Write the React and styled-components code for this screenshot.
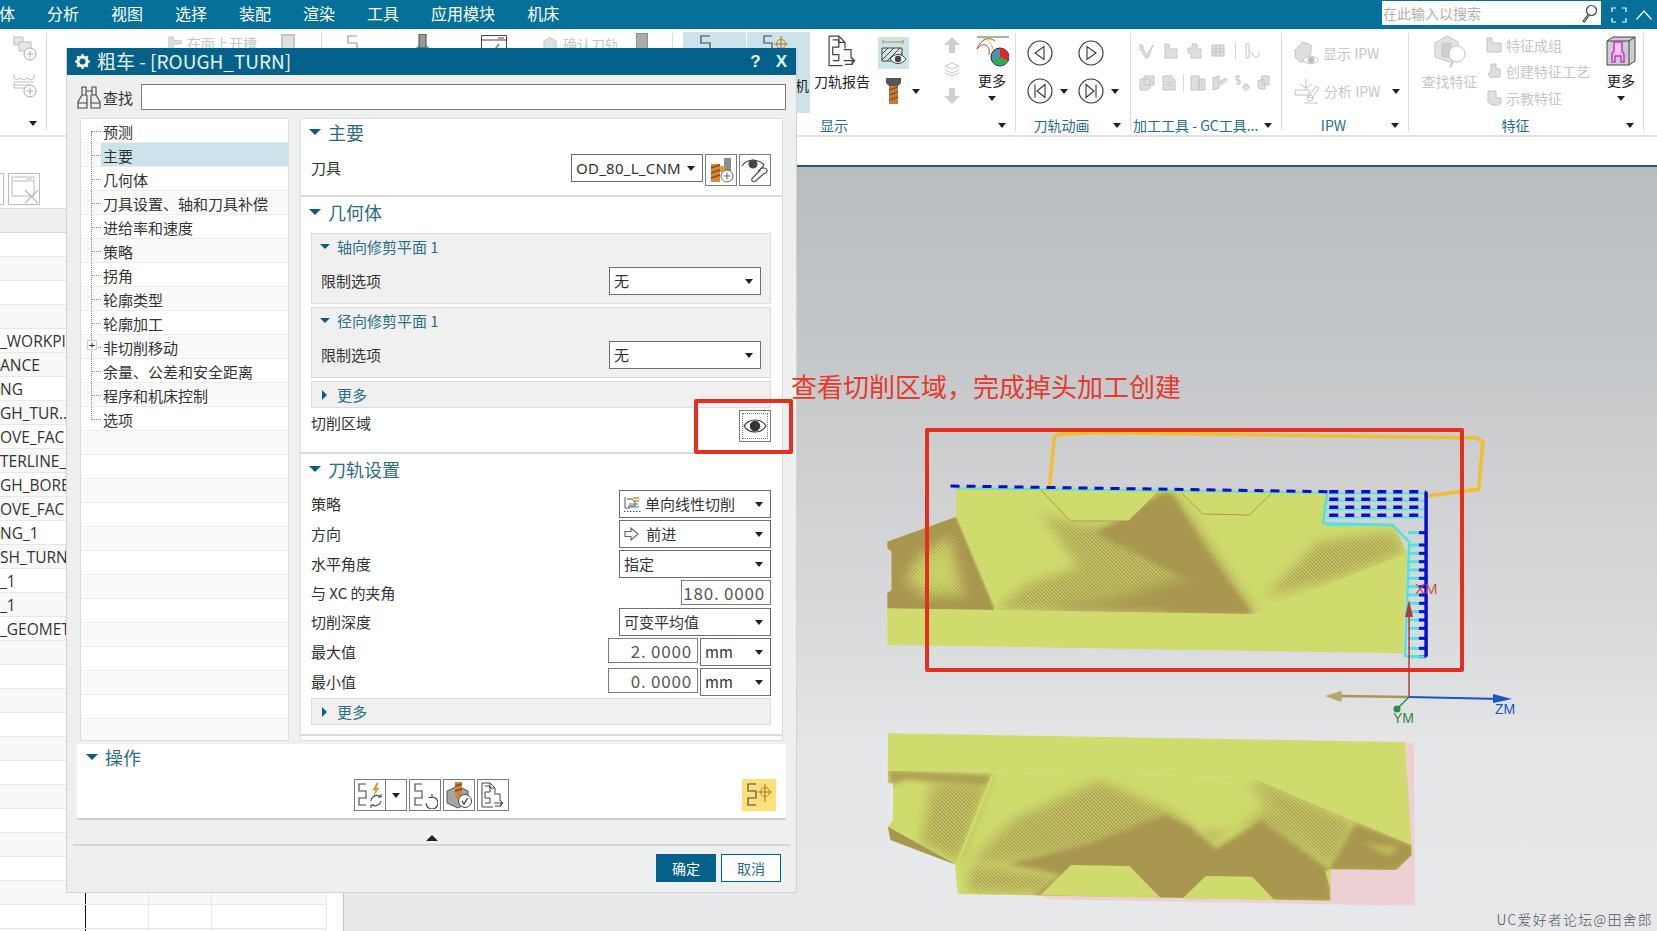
import React from 'react';
import styled, { createGlobalStyle } from 'styled-components';

const GlobalStyle = createGlobalStyle`
  html, body {
    margin: 0;
    padding: 0;
    overflow: hidden;
    background: #fff;
  }
  * {
    box-sizing: border-box;
  }
`;

const Page = styled.div`
  position: relative;
  width: 1657px;
  height: 931px;
  overflow: hidden;
  display: flex;
  flex-direction: column;
  font-family: "Noto Sans CJK SC", "Noto Sans", sans-serif;
  font-size: 15px;
  color: #333;
`;

/* top menu */
const MenuBar = styled.div`
  height: 29px;
  flex: none;
  background: #05719b;
  display: flex;
  align-items: center;
  padding-left: 0;
  color: #fff;
`;

const MenuItem = styled.span`
  font-size: 16px;
  line-height: 27px;
  margin-left: ${(p) => (p.$first ? '-1px' : '32px')};
  margin-top: -2px;
`;

const SearchBox = styled.div`
  margin-left: auto;
  width: 219px;
  height: 24px;
  margin-top: -3px;
  background: #fff;
  display: flex;
  align-items: center;
  justify-content: space-between;
  padding: 0 3px 0 1px;
  color: #b0b0b0;
  font-size: 14px;
`;

const WinIcons = styled.div`
  display: flex;
  align-items: center;
  gap: 9px;
  margin: 0 5px 0 10px;
`;

/* ribbon */
const Ribbon = styled.div`
  height: 108px;
  flex: none;
  display: flex;
  background: #fff;
  border-bottom: 2px solid #e2e2e2;
`;

const Group = styled.div`
  width: ${(p) => p.$w}px;
  flex: none;
  margin-top: 4px;
  height: 98px;
  border-right: 1px solid #dcdcdc;
  display: flex;
  flex-direction: column;
`;

const Tools = styled.div`
  height: 80px;
  flex: none;
  display: flex;
  padding-left: ${(p) => p.$pl || 0}px;
`;

const Foot = styled.div`
  flex: 1;
  display: flex;
  align-items: center;
  margin-top: 2px;
  padding-right: 9px;
`;

const FootLabel = styled.span`
  flex: 1;
  text-align: ${(p) => (p.$left ? 'left' : 'center')};
  padding-left: ${(p) => (p.$left ? '2px' : '0')};
  font-size: 14px;
  line-height: 20px;
  color: #1e6e8c;
  white-space: nowrap;
`;

const Caret = styled.span`
  display: inline-block;
  flex: none;
  width: 0;
  height: 0;
  border-left: 4px solid transparent;
  border-right: 4px solid transparent;
  border-top: 5px solid #222;
  margin-left: ${(p) => p.$ml || 0}px;
  margin-top: ${(p) => p.$mt || 0}px;
`;

const Col = styled.div`
  display: flex;
  flex-direction: column;
  align-items: ${(p) => (p.$start ? 'flex-start' : 'center')};
  flex: none;
  width: ${(p) => (p.$w ? `${p.$w}px` : 'auto')};
  margin-left: ${(p) => p.$ml || 0}px;
  padding-top: ${(p) => p.$pt || 0}px;
  gap: ${(p) => p.$gap || 0}px;
`;

const RowIcons = styled.div`
  display: flex;
  align-items: center;
  margin-left: ${(p) => p.$ml || 0}px;
  margin-top: ${(p) => p.$mt || 0}px;
  gap: ${(p) => p.$gap || 0}px;
`;

const ToolLabel = styled.span`
  font-size: 14px;
  line-height: 18px;
  white-space: nowrap;
  color: ${(p) => (p.$off ? '#c6c6c6' : '#222')};
  margin-top: ${(p) => p.$mt || 0}px;
  margin-left: ${(p) => p.$ml || 0}px;
`;

const HiTool = styled.div`
  width: 63px;
  height: 81px;
  margin-left: ${(p) => p.$ml || 0}px;
  margin-top: -1px;
  background: #cde3ea;
  display: flex;
  flex-direction: column;
  align-items: flex-start;
  padding: 3px 0 0 15px;
  font-size: 14px;
`;

const HiLabel = styled.span`
  align-self: flex-end;
  margin-top: 17px;
  padding-right: 1px;
  font-size: 14px;
  line-height: 18px;
  color: #222;
`;

const ToggleTool = styled.div`
  width: 31px;
  height: 32px;
  background: #cde3ea;
  display: flex;
  align-items: center;
  justify-content: center;
`;

const ButtonGrid = styled.div`
  display: grid;
  grid-template-columns: 51px 51px;
  grid-auto-rows: 38px;
  padding: 1px 0 0 11px;
`;

const GridCell = styled.div`
  display: flex;
  align-items: center;
  gap: 7px;
`;

const VDiv = styled.span`
  width: 1px;
  height: 18px;
  background: #d8d8d8;
  flex: none;
`;

const FeatureList = styled.div`
  display: flex;
  flex-direction: column;
  gap: 7.5px;
  margin-left: 8px;
  padding-top: 2px;
`;

const FeatureItem = styled.div`
  display: flex;
  align-items: center;
  gap: 4px;
  height: 19px;
  font-size: 14px;
  color: #c6c6c6;
  white-space: nowrap;
`;

/* below ribbon */
const Body = styled.div`
  flex: 1;
  display: flex;
  min-height: 0;
`;

const Side = styled.div`
  width: 344px;
  flex: none;
  background: #fff;
  border-right: 1px solid #c4c4c4;
  display: flex;
  flex-direction: column;
  overflow: hidden;
`;

const SideTop = styled.div`
  height: 71px;
  flex: none;
  padding-top: 36px;
  display: flex;
  gap: 4px;
`;

const SideStub = styled.div`
  width: 4px;
  height: 32px;
  border: 1px solid #bcbcbc;
  border-left: none;
`;

const SideHead = styled.div`
  height: 25px;
  flex: none;
  width: 327px;
  background: #efefef;
  border-top: 1px solid #d8d8d8;
  border-bottom: 1px solid #d8d8d8;
`;

const SideRow = styled.div`
  height: 24px;
  flex: none;
  width: 327px;
  display: grid;
  grid-template-columns: 86px 63px 63px 115px;
  background: ${(p) => (p.$alt ? '#f8f8f8' : '#fff')};
  border-bottom: 1px solid #e8e8e8;
  font-size: 15.5px;
  line-height: 25px;
  color: #333;
  font-family: "Open Sans", "Noto Sans", sans-serif;
`;

const SideCell = styled.div`
  border-right: 1px solid ${(p) => (p.$dark ? '#111' : '#e8e8e8')};
  white-space: nowrap;
  overflow: hidden;
`;

const Stage = styled.div`
  flex: 1;
  display: flex;
  flex-direction: column;
`;

const StageStrip = styled.div`
  height: 30px;
  flex: none;
  background: #fff;
  border-bottom: 2px solid #1f5d75;
`;

const Viewport = styled.div`
  flex: 1;
  position: relative;
  background: linear-gradient(180deg, #b7bdc0 0%, #c9cbcd 32%, #dcdddf 65%, #e6e7e9 78%, #e7e8ea 100%);
`;

const Scene = styled.svg`
  position: absolute;
  inset: 0;
  width: 100%;
  height: 100%;
`;

const Watermark = styled.div`
  position: absolute;
  right: 4px;
  bottom: 2px;
  font-size: 14px;
  line-height: 20px;
  letter-spacing: 1.2px;
  color: #55575a;
  white-space: nowrap;
  font-family: "Noto Sans CJK SC", serif;
  font-weight: 300;
`;

/* dialog */
const Dialog = styled.div`
  position: absolute;
  left: 66px;
  top: 48px;
  width: 731px;
  height: 845px;
  background: #eeefef;
  border: 1px solid #d2d2d2;
  border-top: none;
  display: flex;
  flex-direction: column;
`;

const TitleBar = styled.div`
  height: 27px;
  flex: none;
  background: #04628a;
  color: #e8f4f8;
  display: flex;
  align-items: center;
  padding: 0 0 0 8px;
  font-size: 19px;
  gap: 7px;
`;

const TitleText = styled.span`
  flex: 1;
  line-height: 25px;
  margin-top: -2px;
  white-space: nowrap;
`;

const TitleBtn = styled.span`
  font-size: 17px;
  font-weight: 700;
  line-height: 26px;
  margin-right: ${(p) => p.$mr}px;
  font-family: "Liberation Sans", sans-serif;
`;

const FindRow = styled.div`
  height: 43px;
  flex: none;
  display: flex;
  align-items: center;
  padding: 9px 10px 8px 10px;
`;

const FindLabel = styled.span`
  font-size: 15px;
  margin-left: 2px;
  width: 38px;
  flex: none;
`;

const FindInput = styled.div`
  flex: 1;
  height: 26px;
  background: #fff;
  border: 1px solid #7c7c7c;
`;

const Split = styled.div`
  display: flex;
  flex: none;
  height: 623px;
  padding: 0 13px;
  gap: 11px;
`;

const Tree = styled.div`
  position: relative;
  width: 209px;
  flex: none;
  background: #fff;
  border: 1px solid #dcdcdc;
  overflow: hidden;
`;

const TreeRow = styled.div`
  position: relative;
  height: 24px;
  background: ${(p) => (p.$alt ? '#fafafa' : '#fff')};
  border-bottom: 1px solid #ececec;
  padding-left: 20px;
  display: flex;

  &::before {
    content: '';
    display: ${(p) => (p.$blank ? 'none' : 'block')};
    position: absolute;
    left: 10px;
    top: 12px;
    width: 10px;
    border-top: 1px dotted #888;
  }
`;

const TreeText = styled.span`
  flex: 1;
  padding-left: 2px;
  line-height: 25px;
  font-size: 15px;
  color: #333;
  white-space: nowrap;
  background: ${(p) => (p.$sel ? '#cde3ea' : 'transparent')};
`;

const TreeSpine = styled.div`
  position: absolute;
  left: 10px;
  top: 13px;
  height: 288px;
  border-left: 1px dotted #888;
`;

const PlusBox = styled.div`
  position: absolute;
  left: 6px;
  top: 5px;
  width: 10px;
  height: 10px;
  background: #fff;
  border: 1px solid #ccc;
  font-size: 11px;
  line-height: 8px;
  text-align: center;
  font-family: "Liberation Sans", sans-serif;
  color: #222;
  z-index: 1;
`;

const Panel = styled.div`
  flex: 1;
  background: #fff;
  border: 1px solid #dcdcdc;
  overflow: hidden;
`;

const Section = styled.div`
  display: flow-root;
  height: ${(p) => p.$h}px;
  padding: 0 11px 0 10px;
  border-bottom: 2px solid #dadada;
`;

const SectionHead = styled.div`
  height: 30px;
  margin-left: -2px;
  margin-top: ${(p) => p.$mt || 0}px;
  display: flex;
  align-items: center;
  gap: 7px;
  font-size: 18px;
  color: #2a6d84;
`;

const Tri = styled.span`
  display: inline-block;
  flex: none;
  width: 0;
  height: 0;
  ${(p) =>
    p.$right
      ? `border-top: 5px solid transparent;
         border-bottom: 5px solid transparent;
         border-left: 5px solid #0b5d7e;
         margin: 0 3px 0 2px;`
      : `border-left: ${p.$big ? 6 : 5}px solid transparent;
         border-right: ${p.$big ? 6 : 5}px solid transparent;
         border-top: ${p.$big ? 6 : 5}px solid #0b5d7e;`}
`;

const FieldRow = styled.div`
  display: flex;
  align-items: ${(p) => (p.$top ? 'flex-start' : 'center')};
  height: ${(p) => p.$h || 28}px;
  margin-top: ${(p) => p.$mt || 0}px;
  gap: 2px;
`;

const FieldLabel = styled.span`
  flex: 1;
  font-size: 15px;
  line-height: ${(p) => (p.$tall ? '28px' : '22px')};
  color: #333;
  white-space: nowrap;
  align-self: ${(p) => (p.$top || p.$tall ? 'flex-start' : 'center')};
  margin-top: ${(p) => (p.$top ? '2px' : '0')};
`;

const Select = styled.div`
  width: ${(p) => p.$w}px;
  height: 28px;
  flex: none;
  background: #fff;
  border: 1px solid #6f6f6f;
  display: flex;
  align-items: center;
  padding: 0 7px 0 4px;
  font-size: 15px;
  color: #333;
  gap: 4px;
  white-space: nowrap;
`;

const SelectText = styled.span`
  flex: 1;
  min-width: 0;
  overflow: hidden;
  line-height: 28px;
  font-family: ${(p) => (p.$latin ? '"Noto Sans", sans-serif' : 'inherit')};
  letter-spacing: ${(p) => (p.$latin ? '0.25px' : '0')};
`;

const NumInput = styled.div`
  width: ${(p) => p.$w}px;
  height: 25px;
  flex: none;
  background: #fff;
  border: 1px solid #7c7c7c;
  text-align: right;
  padding-right: 5px;
  font-size: 17px;
  line-height: 23px;
  letter-spacing: 0.8px;
  color: #555;
  align-self: flex-start;
`;

const IconBtn = styled.div`
  width: 32px;
  height: 32px;
  flex: none;
  background: #fff;
  border: 1px solid #7c7c7c;
  display: flex;
  align-items: center;
  justify-content: center;
  position: relative;
`;

const FocusRing = styled.div`
  position: absolute;
  inset: 2px;
  border: 1px dotted #777;
`;

const SubGroup = styled.div`
  height: ${(p) => p.$h || 71}px;
  background: #f0f0f0;
  border: 1px solid #dcdcdc;
  margin-top: ${(p) => p.$mt || 0}px;
  padding: 0 9px;
`;

const SubHead = styled.div`
  height: ${(p) => p.$h || 25}px;
  display: flex;
  align-items: center;
  gap: 7px;
  margin-left: -1px;
  font-size: 15px;
  color: #2a7188;
`;

const Actions = styled.div`
  margin: 3px 10px 0 10px;
  height: 76px;
  flex: none;
  background: #fff;
  border-bottom: 2px solid #cfcfcf;
`;

const ActionsHead = styled.div`
  height: 29px;
  display: flex;
  align-items: center;
  gap: 7px;
  padding: 0 0 3px 9px;
  font-size: 18px;
  color: #2a6d84;
`;

const ActionRow = styled.div`
  display: flex;
  align-items: center;
  margin-top: 6px;
  padding: 0 10px 0 277px;
  height: 32px;
`;

const OpBtn = styled.div`
  width: ${(p) => p.$w || 32}px;
  height: 32px;
  flex: none;
  background: #fff;
  border: 1px solid #7c7c7c;
  margin-left: ${(p) => p.$ml || 0}px;
  display: flex;
  align-items: center;
  justify-content: center;
`;

const OpSplit = styled(OpBtn)`
  border-left: none;
  width: 21px;
`;

const OpHot = styled.div`
  width: 34px;
  height: 32px;
  margin-left: auto;
  background: #fde07c;
  display: flex;
  align-items: center;
  justify-content: center;
`;

const CollapseBar = styled.div`
  height: 26px;
  flex: none;
  margin: 0 6px;
  border-bottom: 2px solid #d6d6d6;
  display: flex;
  justify-content: center;
  align-items: flex-end;
  padding-bottom: 3px;
`;

const UpTri = styled.span`
  width: 0;
  height: 0;
  border-left: 6px solid transparent;
  border-right: 6px solid transparent;
  border-bottom: 6px solid #222;
`;

const Footer = styled.div`
  display: flex;
  justify-content: flex-end;
  gap: 5px;
  padding: 8px 15px 0 0;
`;

const DlgButton = styled.div`
  width: 60px;
  height: 28px;
  text-align: center;
  line-height: 26px;
  font-size: 14px;
  border: 1px solid #04628a;
  background: ${(p) => (p.$primary ? '#04628a' : '#fff')};
  color: ${(p) => (p.$primary ? '#fff' : '#2a6d84')};
`;

/* annotations laid over the screenshot */
const RedBox = styled.div`
  position: absolute;
  left: ${(p) => p.$l}px;
  top: ${(p) => p.$t}px;
  width: ${(p) => p.$w}px;
  height: ${(p) => p.$h}px;
  border: 4px solid #e62d20;
  border-radius: 2px;
`;

const RedNote = styled.div`
  position: absolute;
  left: 791px;
  top: 367px;
  font-size: 26px;
  line-height: 38px;
  color: #e5392c;
  white-space: nowrap;
`;

const Svg = styled.svg`
  display: block;
  flex: none;
`;

/* icons */
const PATH_D = 'M12 1H3v7h9v7H3v7h9';

const Glyph = ({ w = 16, h = 23, c = '#444' }) => (
  <Svg width={w} height={h} viewBox="0 0 16 23" fill="none" stroke={c} strokeWidth="1.2">
    <path d={PATH_D} />
  </Svg>
);

const Magnifier = () => (
  <Svg width="17" height="19" viewBox="0 0 17 19" fill="none" stroke="#444" strokeWidth="1.2">
    <circle cx="10.5" cy="6.5" r="5" />
    <path d="M7 10.5 2 17l1.5 1 4.5-6.5" />
  </Svg>
);

const FullScreen = () => (
  <Svg width="16" height="16" viewBox="0 0 16 16" fill="none" stroke="#fff" strokeWidth="1.2">
    <path d="M1 5V1h4M11 1h4v4M15 11v4h-4M5 15H1v-4" />
  </Svg>
);

const Collapse = () => (
  <Svg width="16" height="10" viewBox="0 0 16 10" fill="none" stroke="#fff" strokeWidth="1.2">
    <path d="M0.5 9.5 8 1l7.5 8.5" />
  </Svg>
);

const Gear = () => (
  <Svg width="15" height="15" viewBox="0 0 15 15">
    <circle cx="7.5" cy="7.5" r="4.6" fill="none" stroke="#fff" strokeWidth="3" />
    <path d="M7.5 0v3M7.5 12v3M0 7.5h3M12 7.5h3M2.2 2.2l2 2M10.8 10.8l2 2M12.8 2.2l-2 2M4.2 10.8l-2 2" stroke="#fff" strokeWidth="2.2" />
  </Svg>
);

const Binoculars = () => (
  <Svg width="24" height="23" viewBox="0 0 24 23" fill="none" stroke="#444" strokeWidth="1.1">
    <path d="M5 1h4v8H5zM15 1h4v8h-4zM9 5h6M5 9 1 16v6h9V9M19 9l4 7v6h-9V9M1 17h9M14 17h9" />
  </Svg>
);

const PlusBadge = ({ x, y, c = '#666' }) => (
  <g>
    <circle cx={x} cy={y} r="6" fill="#fff" stroke={c} />
    <path d={`M${x - 3.5} ${y}h7M${x} ${y - 3.5}v7`} stroke={c} />
  </g>
);

const NewTool = () => (
  <Svg width="28" height="28" viewBox="0 0 28 28">
    <path d="M17 2h7v14h-7z" fill="#8d8d8d" />
    <path d="M4 8h9v18H4z" fill="#d98a34" />
    <path d="M4 12l9-3M4 17l9-3M4 22l9-3" stroke="#8b4a12" strokeWidth="1.5" />
    <path d="M13 10h5v6h-5z" fill="#e59a3f" />
    <PlusBadge x={20} y={20} />
  </Svg>
);

const EyeWrench = () => (
  <Svg width="28" height="28" viewBox="0 0 28 28" fill="none" stroke="#444" strokeWidth="1.1">
    <path d="M1 10C5 3 17 2 23 9c-2 3-4 5-6 6" />
    <circle cx="12" cy="8" r="4" fill="#444" />
    <path d="M23 12c3 0 4 3 2 5l-2 .5-9 8c-2 1-4-1-3-3l8-8c0-1 1-3 4-2.500z" fill="#fff" />
  </Svg>
);

const Eye = () => (
  <Svg width="24" height="16" viewBox="0 0 24 16" fill="none" stroke="#333" strokeWidth="1.2">
    <path d="M1 8c5-8 17-8 22 0-5 8-17 8-22 0z" />
    <circle cx="12" cy="8" r="4.6" fill="#333" />
  </Svg>
);

const StrategyIcon = () => (
  <Svg width="17" height="17" viewBox="0 0 17 17" fill="none" stroke="#555" strokeWidth="1">
    <path d="M1 1v11h5M3 3h5l3 3v4H4" />
    <path d="M9 2h6M9 5h6" stroke="#d88a2e" strokeWidth="1.4" />
    <path d="M5 8h9M5 11h10" stroke="#3d7f96" />
    <path d="M0 15.500h17" strokeDasharray="1.500 1.500" />
  </Svg>
);

const ForwardArrow = () => (
  <Svg width="15" height="14" viewBox="0 0 15 14" fill="none" stroke="#666" strokeWidth="1.1">
    <path d="M1 4.500h6V1l7 6-7 6V9.500H1z" />
  </Svg>
);

const OpGenerate = () => (
  <Svg width="28" height="27" viewBox="0 0 28 27" fill="none" stroke="#444" strokeWidth="1.1">
    <path d="M10 2H3v7h7v7H3v7h7" />
    <path d="M21 1l-4 7h3l-2 5 5-7h-3l2-5z" fill="#e3a51f" stroke="#a97912" strokeWidth=".5" />
    <path d="M15 19a6 6 0 0 1 10-4M25 19a6 6 0 0 1-9 4M25 12v3h-3M15 26v-3h3" />
  </Svg>
);

const OpReplay = () => (
  <Svg width="26" height="27" viewBox="0 0 26 27" fill="none" stroke="#444" strokeWidth="1.1">
    <path d="M10 2H3v7h7v7H3v7h7" />
    <path d="M20 15a6 6 0 1 1-6 6M20 12v3.500h-3.500" />
  </Svg>
);

const OpVerify = () => (
  <Svg width="28" height="28" viewBox="0 0 28 28">
    <path d="M2 10l11-5 10 5v12l-10 5-11-5z" fill="#a5a5a5" stroke="#555" />
    <path d="M10 1h7v14l-3.500 4-3.500-4z" fill="#cf8140" />
    <path d="M10 5l7-2M10 10l7-2" stroke="#8b4a12" strokeWidth="1.5" />
    <circle cx="20" cy="20" r="6.500" fill="#fff" stroke="#444" />
    <path d="M17 20l2 3 3.500-6" fill="none" stroke="#333" strokeWidth="1.2" />
  </Svg>
);

const ReportIcon = ({ w = 26, h = 27 }) => (
  <Svg width={w} height={h} viewBox="0 0 26 27" fill="none" stroke="#444" strokeWidth="1">
    <path d="M2 1h8l5 5v5M2 1v24h11M5 4h5v6H5v6h5v5H5" />
    <path d="M10 1v5h5M14 12h6v7M15 24h6v-4M14 21h8M20 18l3 3-3 3" />
  </Svg>
);

const OpHotIcon = () => (
  <Svg width="26" height="24" viewBox="0 0 26 24" fill="none" stroke="#444" strokeWidth="1.1">
    <path d="M10 1H2v7h8v7H2v7h8" />
    <circle cx="19" cy="9" r="4.500" stroke="#d27b1e" />
    <path d="M19 1v18M12 9h14" stroke="#b5721f" />
  </Svg>
);

const ToolColor = () => (
  <Svg width="15" height="26" viewBox="0 0 15 26">
    <path d="M0 0h15v5l-3 3H3L0 5z" fill="#555" />
    <path d="M3 8h9v18H3z" fill="#c57a3c" />
    <path d="M3 12l9-3M3 17l9-3M3 22l9-3" stroke="#844512" strokeWidth="1.3" />
  </Svg>
);

const HatchEye = () => (
  <Svg width="26" height="28" viewBox="0 0 26 28" fill="none">
    <path d="M2 3h20M2 1v4M22 1v4" stroke="#c9872e" />
    <path d="M1 9h20v13H1z" fill="#d8e6e6" stroke="#444" />
    <path d="M1 15l6-6M1 21l12-12M6 22l13-13M13 22l8-8" stroke="#444" />
    <path d="M9 20c4-6 12-6 16 0-4 6-12 6-16 0z" fill="#fff" stroke="#444" />
    <circle cx="17" cy="20" r="3.200" fill="#444" />
  </Svg>
);

const Wheel = () => (
  <Svg width="34" height="32" viewBox="0 0 34 32" fill="none">
    <path d="M2 2h32" stroke="#3b7f2b" />
    <path d="M2 14C6 4 14 1 20 6M2 14c6-8 14-4 12 6" stroke="#c93a3a" />
    <path d="M8 3c8 2 10 10 12 16" stroke="#e0b42c" />
    <circle cx="25" cy="22" r="9" fill="#4f93aa" stroke="#222" />
    <path d="M25 22V13a9 9 0 0 1 8 13z" fill="#e0262e" />
    <path d="M25 22l8 4a9 9 0 0 1-15 1z" fill="#2fae4b" />
  </Svg>
);

const Arrow = ({ down }) => (
  <Svg width="18" height="16" viewBox="0 0 18 16">
    <path d={down ? 'M6 0h6v8h5l-8 8-8-8h5z' : 'M6 16h6V8h5L9 0 1 8h5z'} fill="#cfcfcf" />
  </Svg>
);

const Layers = () => (
  <Svg width="16" height="17" viewBox="0 0 16 17" fill="none" stroke="#c8c8c8">
    <path d="M8 1l7 3-7 3-7-3zM1 8l7 3 7-3M1 11l7 3 7-3" />
  </Svg>
);

const PlayCircle = ({ kind }) => (
  <Svg width="26" height="26" viewBox="0 0 26 26" fill="none" stroke="#333" strokeWidth="1.1">
    <circle cx="13" cy="13" r="12" />
    {kind === 'back' && <path d="M17 6.500v13L8 13z" />}
    {kind === 'play' && <path d="M9 6.500v13L18 13z" />}
    {kind === 'first' && <path d="M18 6.500v13L10 13zM8 6.500v13" />}
    {kind === 'last' && <path d="M8 6.500v13L16 13zM18 6.500v13" />}
  </Svg>
);

const Dim = ({ w = 16, h = 16, d, fill = '#dfdfdf' }) => (
  <Svg width={w} height={h} viewBox="0 0 16 16" fill={fill} stroke="#c4c4c4">
    <path d={d} />
  </Svg>
);

const AddFace = () => (
  <Svg width="24" height="25" viewBox="0 0 24 25" fill="#e6e6e6" stroke="#bdbdbd">
    <path d="M1 1h9v8H1z" />
    <path d="M6 6h12v9H6z" />
    <PlusBadge x={17} y={18} c="#aaa" />
  </Svg>
);

const AddWave = () => (
  <Svg width="24" height="25" viewBox="0 0 24 25" fill="none" stroke="#bdbdbd">
    <path d="M1 1v4l3 2 3-2 4 2 3-2 4 2 3-2V1" />
    <path d="M1 9h20M1 9v6h16M1 12h16" />
    <PlusBadge x={17} y={18} c="#aaa" />
  </Svg>
);

const DIM_ROW_1 = ['M1 1l3 2v3l4 6 6-10-5 13h-2L1 6z', 'M2 1h4v5h8v9H2z', 'M5 1h5v5h4v9H4v-5H1V5h4z', 'M1 2h12v11H1zM1 6h12M1 9h12M5 2v11M9 2v11'];
const DIM_ROW_2A = ['M5 1h10v9H5zM1 4h10v9l-3 2H1z', 'M2 1h8l4 4v10H2zM5 7h6M5 10h6'];
const DIM_ROW_2B = ['M1 1h8v14H1zM9 4h6v11H9zM11 7h2M11 10h2', 'M1 3l6-2v12l-6 2zM7 7l7-4 1 2-6 5z', 'M6 1H2v4h4v4H2M12 9a3 3 0 1 0 .1 0z', 'M6 1h7v9H6zM2 6l5-2 2 4v6H4l-2-3z'];

const CubeEye = () => (
  <Svg width="26" height="24" viewBox="0 0 26 24" fill="#ddd" stroke="#c4c4c4">
    <path d="M1 9l8-8 8 3v8l-5 9H6l-5-5z" />
    <path d="M9 19c3-5 12-5 16 0-4 5-13 5-16 0z" fill="#fff" />
    <circle cx="17" cy="19" r="3" fill="#bbb" />
  </Svg>
);

const Analyze = () => (
  <Svg width="27" height="26" viewBox="0 0 27 26" fill="none" stroke="#c4c4c4">
    <path d="M1 12h14v5H1zM12 1v11M6 6l6 4 6-4M14 19l8-11 3 2-7 10zM10 25h14" />
    <circle cx="16" cy="20" r="3" />
  </Svg>
);

const FindFeature = () => (
  <Svg width="34" height="33" viewBox="0 0 34 33" fill="#e3e3e3" stroke="#c6c6c6">
    <path d="M2 8l12-7 11 6v14l-9 6-14-5z" />
    <path d="M9 8h9v14H9z" fill="#cfcfcf" />
    <path d="M20 26l-3 6" strokeWidth="2" />
    <circle cx="24" cy="19" r="8" fill="#fff" />
  </Svg>
);

const MoreFeature = () => (
  <Svg width="30" height="30" viewBox="0 0 30 30">
    <path d="M1 5l6-4h22v24l-6 4H1z" fill="#c9cdce" stroke="#444" />
    <path d="M23 29V5H1M23 5l6-4" fill="none" stroke="#444" />
    <path d="M8 6h8v9l2 3v8h-3v-6H9v6H6v-8l2-3z" fill="#f2c9ee" stroke="#d62ad2" strokeWidth="1.5" />
  </Svg>
);

const WindowX = () => (
  <Svg width="32" height="32" viewBox="0 0 32 32" fill="none" stroke="#bcbcbc">
    <path d="M.5.500h31v31H.5z" />
    <path d="M4 4h22v19H4zM4 8h22M18 6h6" />
    <path d="M17 17l13 13M30 17 17 30" strokeWidth="1.4" />
  </Svg>
);

const DIM_ICON_BOX = 'M1 1h5v5h9v9H1z';

/* part drawing: points are written in crop coordinates of the model views */
const upper = (pts) => pts.map(([x, y]) => `${860 + x / 2.376},${410 + y / 3}`).join(' ');
const lower = (pts) => pts.map(([x, y]) => `${860 + x / 1.967},${720 + y / 3}`).join(' ');

const YELLOW = '#cfdc6d';
const BROWN = '#a99750';

const UP_BODY = [[65, 395], [228, 320], [228, 235], [1110, 248], [1105, 340], [1270, 345], [1300, 430], [935, 612], [65, 595], [65, 550], [75, 540], [75, 425], [65, 415]];
const UP_BASE = [[65, 595], [935, 612], [1300, 430], [1290, 730], [65, 705]];

const LOW_BODY = [[55, 152], [770, 172], [1085, 375], [1085, 405], [1055, 450], [925, 448], [925, 542], [195, 522], [190, 435], [60, 360], [55, 320], [65, 300], [65, 190], [55, 190]];
const LOW_TOP = [[55, 40], [1072, 66], [1085, 375], [770, 172], [55, 152]];
const LOW_PINK = [[1072, 68], [1090, 70], [1092, 557], [372, 538], [350, 520], [900, 300]];

const TICKS = [368, 405, 430, 455, 480, 505, 530, 555, 580, 605, 630, 655, 685, 715, 740];
const RUNGS = [250, 272, 298, 322, 345];
const DASHES = [245, 268, 292, 316];

/* a soft edged patch of dither lines, the way the shaded faces render */
const Hatched = ({ id, points, color = 'url(#hatchBrown)', blur = 'soft' }) => (
  <>
    <mask id={id} maskUnits="userSpaceOnUse" x="344" y="167" width="1313" height="764">
      <polygon points={points} fill="#fff" filter={`url(#${blur})`} />
    </mask>
    <rect x="344" y="167" width="1313" height="764" fill={color} mask={`url(#${id})`} />
  </>
);

const SceneDrawing = () => (
  <Scene viewBox="344 167 1313 764">
    <defs>
      <filter id="soft" x="-30%" y="-30%" width="160%" height="160%">
        <feGaussianBlur stdDeviation="6" />
      </filter>
      <filter id="softer" x="-20%" y="-20%" width="140%" height="140%">
        <feGaussianBlur stdDeviation="2.500" />
      </filter>
      <pattern id="hatchBrown" width="2.500" height="2.500" patternUnits="userSpaceOnUse" patternTransform="rotate(45)">
        <rect width="2.500" height="1.500" fill={BROWN} />
      </pattern>
      <pattern id="hatchYellow" width="2.500" height="2.500" patternUnits="userSpaceOnUse" patternTransform="rotate(-45)">
        <rect width="2.500" height="1.500" fill={YELLOW} />
      </pattern>
      <clipPath id="upClip">
        <polygon points={upper(UP_BODY)} />
      </clipPath>
      <clipPath id="lowClip">
        <polygon points={lower(LOW_BODY)} />
      </clipPath>
    </defs>

    {/* upper part */}
    <polygon points={upper(UP_BASE)} fill={YELLOW} />
    <polygon points={upper(UP_BODY)} fill={YELLOW} />
    <g clipPath="url(#upClip)">
      <polygon points={upper([[60, 395], [228, 320], [318, 600], [60, 600]])} fill={BROWN} />
      <Hatched id="u1" points={upper([[105, 510], [135, 440], [215, 375], [250, 560], [150, 560]])} color="url(#hatchYellow)" />
      <polygon points={upper([[130, 510], [150, 460], [205, 410], [225, 530], [160, 530]])} fill={YELLOW} filter="url(#soft)" opacity=".55" />
      <Hatched id="u2" points={upper([[430, 310], [520, 345], [640, 345], [715, 245], [750, 250], [945, 612], [318, 602], [400, 520], [520, 470]])} />
      <polygon points={upper([[715, 250], [740, 250], [830, 430], [932, 612], [720, 606], [790, 520], [640, 420], [560, 370]])} fill={BROWN} filter="url(#softer)" />
      <polygon points={upper([[420, 600], [932, 612], [770, 500], [600, 570]])} fill={BROWN} filter="url(#soft)" />
      <Hatched id="u3" points={upper([[960, 560], [1090, 395], [1265, 365], [1295, 425], [1120, 510]])} />
    </g>
    <polygon points={upper([[430, 240], [500, 333], [638, 333], [710, 245]])} fill={YELLOW} />
    <polyline points={upper([[430, 240], [500, 333], [638, 333], [710, 245]])} fill="none" stroke="#a69a52" />
    <polygon points={upper([[765, 250], [815, 312], [925, 315], [978, 250]])} fill={YELLOW} />
    <polyline points={upper([[765, 250], [815, 312], [925, 315], [978, 250]])} fill="none" stroke="#a69a52" />
    <polyline points={upper([[228, 325], [318, 595]])} fill="none" stroke="#b4ac5c" strokeWidth="2" />

    {/* tool path */}
    <polyline
      points={upper([[450, 232], [462, 80], [475, 72], [580, 68], [1465, 84], [1480, 95], [1470, 238], [1345, 258]])}
      fill="none"
      stroke="#f2bd2e"
      strokeWidth="3.500"
    />
    <polyline points={upper([[228, 235], [1110, 248]])} fill="none" stroke="#5fe3cf" strokeWidth="2" />
    <polyline points={upper([[228, 225], [1345, 245]])} fill="none" stroke="#e4c7bf" strokeWidth="2" opacity=".6" />
    {RUNGS.map((y) => (
      <polyline key={y} points={upper([[1108, y], [y === 345 ? 1270 : 1340, y]])} fill="none" stroke="#5fe8e0" strokeWidth="2.500" />
    ))}
    {TICKS.map((y) => (
      <polyline key={y} points={upper([[1302, y], [1340, y]])} fill="none" stroke="#4fe4e4" strokeWidth="3" />
    ))}
    {TICKS.map((y) => (
      <polyline key={`b${y}`} points={upper([[1328, y], [1345, y]])} fill="none" stroke="#0a10c8" strokeWidth="3" />
    ))}
    <polyline
      points={upper([[1110, 248], [1100, 340], [1265, 345], [1305, 395], [1295, 738], [1342, 740]])}
      fill="none"
      stroke="#52e2da"
      strokeWidth="2.500"
    />
    <polyline points={upper([[215, 228], [1115, 245]])} fill="none" stroke="#0a0ccc" strokeWidth="3" strokeDasharray="9 7" />
    {DASHES.map((y) => (
      <polyline key={y} points={upper([[1115, y], [1345, y]])} fill="none" stroke="#0a0ccc" strokeWidth="3.500" strokeDasharray="9 7" />
    ))}
    <polyline points={upper([[1345, 245], [1345, 740]])} fill="none" stroke="#0a0ccc" strokeWidth="3.500" />

    {/* axes */}
    <path d="M1409 697V610" stroke="#b23b3b" strokeWidth="1.500" />
    <path d="M1409 600l-4 17h8z" fill="#b23b3b" />
    <text x="1415" y="594" fontSize="15" fill="#c25555" fontFamily="Liberation Sans, sans-serif">XM</text>
    <path d="M1409 697l-70-1" stroke="#a8955c" strokeWidth="2.500" />
    <path d="M1325 696l16-5 2 5-2 6z" fill="#b9a670" />
    <path d="M1409 697l92 2" stroke="#1a55c4" strokeWidth="2" />
    <path d="M1512 699l-19-5v9z" fill="#1a55c4" />
    <path d="M1409 697l-11 11" stroke="#2f8a43" strokeWidth="1.500" />
    <circle cx="1397" cy="709" r="3.500" fill="#2f8a43" />
    <text x="1393" y="723" fontSize="14" fill="#2f8a43" fontFamily="Liberation Sans, sans-serif">YM</text>
    <text x="1495" y="714" fontSize="14" fill="#1a55c4" fontFamily="Liberation Sans, sans-serif">ZM</text>

    {/* lower part */}
    <polygon points={lower(LOW_PINK)} fill="#ecd0d3" />
    <polygon points={lower(LOW_TOP)} fill={YELLOW} />
    <polygon points={lower(LOW_BODY)} fill={YELLOW} />
    <g clipPath="url(#lowClip)">
      <polygon points={lower([[600, 285], [650, 320], [700, 385], [790, 300], [920, 445], [930, 545], [590, 545], [340, 530], [395, 465], [290, 432], [450, 370]])} fill={BROWN} filter="url(#softer)" />
      <Hatched id="l1" points={lower([[470, 180], [620, 280], [690, 370], [800, 270], [760, 180], [920, 440], [800, 320], [640, 340], [280, 430], [220, 420], [300, 300]])} />
      <Hatched id="l2" points={lower([[770, 175], [800, 190], [975, 310], [925, 445], [830, 300]])} />
      <polygon points={lower([[975, 308], [1090, 375], [1090, 410], [1055, 455], [920, 452]])} fill={BROWN} filter="url(#softer)" />
      <polygon points={lower([[990, 370], [1060, 380], [1040, 410]])} fill={YELLOW} filter="url(#softer)" opacity=".5" />
      <polygon points={lower([[55, 150], [260, 165], [250, 195], [90, 180], [60, 195]])} fill={BROWN} filter="url(#softer)" opacity=".85" />
      <polygon points={lower([[55, 320], [190, 435], [55, 365]])} fill={BROWN} />
      <Hatched id="l3" points={lower([[140, 190], [255, 180], [195, 425], [120, 370]])} />
      <Hatched id="l4" points={lower([[220, 435], [395, 465], [360, 520], [210, 515]])} />
    </g>
    <polygon points={lower([[415, 435], [530, 438], [592, 535], [355, 525]])} fill={YELLOW} />
    <polygon points={lower([[680, 468], [772, 470], [815, 540], [635, 535]])} fill={YELLOW} />
    <polygon points={lower([[915, 452], [926, 450], [925, 505]])} fill={YELLOW} />
    <polyline points={lower([[260, 170], [190, 435], [195, 522]])} fill="none" stroke={YELLOW} strokeWidth="3" />
  </Scene>
);

const MENU = ['体', '分析', '视图', '选择', '装配', '渲染', '工具', '应用模块', '机床'];
const SIDE_TEXT = {
  4: '_WORKPI',
  5: 'ANCE',
  6: 'NG',
  7: 'GH_TUR..',
  8: 'OVE_FAC',
  9: 'TERLINE_.',
  10: 'GH_BORE',
  11: 'OVE_FAC',
  12: 'NG_1',
  13: 'SH_TURN.',
  14: '_1',
  15: '_1',
  16: '_GEOMET',
};
const TREE = ['预测', '主要', '几何体', '刀具设置、轴和刀具补偿', '进给率和速度', '策略', '拐角', '轮廓类型', '轮廓加工', '非切削移动', '余量、公差和安全距离', '程序和机床控制', '选项'];

const App = () => (
  <Page>
    <GlobalStyle />
    <MenuBar>
      {MENU.map((m, i) => (
        <MenuItem key={m} $first={i === 0}>{m}</MenuItem>
      ))}
      <SearchBox>
        在此输入以搜索
        <Magnifier />
      </SearchBox>
      <WinIcons>
        <FullScreen />
        <Collapse />
      </WinIcons>
    </MenuBar>

    <Ribbon>
      <Group $w={47}>
        <Tools $pl={13}>
          <Col $pt={3} $gap={12}>
            <AddFace />
            <AddWave />
          </Col>
        </Tools>
        <Foot>
          <FootLabel />
          <Caret $ml={3} />
        </Foot>
      </Group>

      <Group $w={275}>
        <Tools $pl={25}>
          <RowIcons>
            <Dim w={32} h={32} d="M1 1h3l3 3h4l3-3h1v14H1z" fill="none" />
            <RowIcons $ml={20}><Dim w={32} h={32} d="M1 3h11l3-2v14H1zM5 3v12" fill="none" /></RowIcons>
          </RowIcons>
          <Col $ml={12} $pt={1}>
            <RowIcons $gap={5}>
              <Dim w={14} h={16} d="M1 1h5v4h9v4H6v6H1z" />
              <ToolLabel $off>在面上开槽</ToolLabel>
            </RowIcons>
          </Col>
          <Col $ml={23} $pt={0}>
            <Dim w={32} h={32} d="M1 1h6v14H1zM8 8h7v2H8z" />
          </Col>
        </Tools>
      </Group>

      <Group $w={351}>
        <Tools $pl={23}>
          <Col $pt={2}><Glyph c="#999" /></Col>
          <Col $ml={48} $pt={1}>
            <Svg width="28" height="30" viewBox="0 0 28 30" fill="none" stroke="#444">
              <path d="M10 0h7v14h-7z" fill="#999" />
              <path d="M1 20l9-8M27 20l-10-8M1 20v8h26v-8" />
            </Svg>
          </Col>
          <Col $ml={44} $pt={2}>
            <Svg width="26" height="24" viewBox="0 0 26 24" fill="none" stroke="#444">
              <path d="M.5.500h25v22H.5zM.5 5h25M17 3h6" />
              <path d="M8 14l3 4 7-9" stroke="#4aaa3c" strokeWidth="1.500" />
            </Svg>
          </Col>
          <Col $ml={36} $pt={2}>
            <RowIcons $gap={5}>
              <Dim w={15} h={16} d="M1 5l6-4 7 4v7l-7 3-6-3z" />
              <ToolLabel $off>确认刀轨</ToolLabel>
            </RowIcons>
          </Col>
          <Col $ml={17} $pt={0}>
            <RowIcons $gap={5}>
              <Svg width="12" height="32" viewBox="0 0 12 32"><path d="M0 0h12v30H0z" fill="#aaa" stroke="#777" /></Svg>
              <Svg width="14" height="32" viewBox="0 0 14 32" fill="none" stroke="#555"><path d="M0 16h14" /></Svg>
            </RowIcons>
          </Col>
        </Tools>
      </Group>

      <Group $w={343}>
        <Tools $pl={10}>
          <HiTool><Glyph /></HiTool>
          <HiTool $ml={1}>
            <OpHotIcon />
            <HiLabel>机</HiLabel>
          </HiTool>
          <Col $w={58} $ml={3} $pt={2}>
            <ReportIcon w={33} h={33} />
            <ToolLabel $mt={4}>刀轨报告</ToolLabel>
          </Col>
          <Col $ml={7} $pt={4} $start>
            <ToggleTool><HatchEye /></ToggleTool>
            <RowIcons $mt={9} $gap={11} $ml={8}>
              <ToolColor />
              <Caret />
            </RowIcons>
          </Col>
          <Col $ml={23} $w={18} $pt={4} $gap={9}>
            <Arrow />
            <Layers />
            <Arrow down />
          </Col>
          <Col $w={38} $ml={12} $pt={2}>
            <Wheel />
            <ToolLabel $mt={4}>更多</ToolLabel>
            <Caret $mt={7} />
          </Col>
        </Tools>
        <Foot>
          <FootLabel>显示</FootLabel>
          <Caret $ml={3} />
        </Foot>
      </Group>

      <Group $w={115}>
        <Tools>
          <ButtonGrid>
            <GridCell><PlayCircle kind="back" /></GridCell>
            <GridCell><PlayCircle kind="play" /></GridCell>
            <GridCell><PlayCircle kind="first" /><Caret /></GridCell>
            <GridCell><PlayCircle kind="last" /><Caret /></GridCell>
          </ButtonGrid>
        </Tools>
        <Foot>
          <FootLabel>刀轨动画</FootLabel>
          <Caret $ml={6} />
        </Foot>
      </Group>

      <Group $w={151}>
        <Tools $pl={8}>
          <Col $start>
            <RowIcons $mt={9} $gap={8}>
              {DIM_ROW_1.map((d) => <Dim key={d} d={d} />)}
              <VDiv />
              <Dim d="M2 1h3v14H2zM5 8l4 3a3 3 0 1 0 5-2" fill="none" />
            </RowIcons>
            <RowIcons $mt={14} $gap={6}>
              {DIM_ROW_2A.map((d) => <Dim key={d} d={d} />)}
              <VDiv />
              {DIM_ROW_2B.map((d) => <Dim key={d} d={d} />)}
            </RowIcons>
          </Col>
        </Tools>
        <Foot>
          <FootLabel $left>加工工具 - GC工具...</FootLabel>
          <Caret $ml={3} />
        </Foot>
      </Group>

      <Group $w={127}>
        <Tools $pl={12}>
          <Col $start>
            <RowIcons $mt={8} $gap={3}>
              <CubeEye />
              <ToolLabel $off>显示 IPW</ToolLabel>
            </RowIcons>
            <RowIcons $mt={13} $gap={3}>
              <Analyze />
              <ToolLabel $off>分析 IPW</ToolLabel>
              <Caret $ml={9} />
            </RowIcons>
          </Col>
        </Tools>
        <Foot>
          <FootLabel>IPW</FootLabel>
          <Caret $ml={6} />
        </Foot>
      </Group>

      <Group $w={235}>
        <Tools $pl={12}>
          <Col $w={57} $pt={2}>
            <FindFeature />
            <ToolLabel $off $mt={4}>查找特征</ToolLabel>
          </Col>
          <FeatureList>
            <FeatureItem><Dim d={DIM_ICON_BOX} />特征成组</FeatureItem>
            <FeatureItem><Dim d="M5 1h5v5h4v8H8l-3 1-3-4 3-3z" />创建特征工艺</FeatureItem>
            <FeatureItem><Dim d="M2 1h8v7h5v5l-3 2H6l-4-3z" />示教特征</FeatureItem>
          </FeatureList>
          <Col $w={30} $ml={16} $pt={3}>
            <MoreFeature />
            <ToolLabel $mt={5}>更多</ToolLabel>
            <Caret $mt={7} />
          </Col>
        </Tools>
        <Foot>
          <FootLabel>特征</FootLabel>
          <Caret $ml={4} />
        </Foot>
      </Group>
    </Ribbon>

    <Body>
      <Side>
        <SideTop><SideStub /><WindowX /></SideTop>
        <SideHead />
        {Array.from({ length: 30 }, (_, i) => (
          <SideRow key={i} $alt={i % 2 === 1}>
            <SideCell $dark>{SIDE_TEXT[i]}</SideCell>
            <SideCell />
            <SideCell />
            <SideCell />
          </SideRow>
        ))}
      </Side>
      <Stage>
        <StageStrip />
        <Viewport>
          <SceneDrawing />
          <Watermark>UC爱好者论坛@田舍郎</Watermark>
        </Viewport>
      </Stage>
    </Body>

    <Dialog>
      <TitleBar>
        <Gear />
        <TitleText>粗车 - [ROUGH_TURN]</TitleText>
        <TitleBtn $mr={8}>?</TitleBtn>
        <TitleBtn $mr={9}>X</TitleBtn>
      </TitleBar>
      <FindRow>
        <Binoculars />
        <FindLabel>查找</FindLabel>
        <FindInput />
      </FindRow>
      <Split>
        <Tree>
          {Array.from({ length: 26 }, (_, i) => (
            <TreeRow key={i} $alt={i % 2 === 1} $blank={i >= TREE.length}>
              {i === 9 && <PlusBox>+</PlusBox>}
              <TreeText $sel={i === 1}>{TREE[i]}</TreeText>
            </TreeRow>
          ))}
          <TreeSpine />
        </Tree>
        <Panel>
          <Section $h={78}>
            <SectionHead $mt={-2}><Tri $big />主要</SectionHead>
            <FieldRow $h={32} $mt={7} $top>
              <FieldLabel $tall>刀具</FieldLabel>
              <Select $w={132}>
                <SelectText $latin>OD_80_L_CNM</SelectText>
                <Caret />
              </Select>
              <IconBtn><NewTool /></IconBtn>
              <IconBtn><EyeWrench /></IconBtn>
            </FieldRow>
          </Section>
          <Section $h={257}>
            <SectionHead><Tri $big />几何体</SectionHead>
            <SubGroup $mt={6}>
              <SubHead><Tri />轴向修剪平面 1</SubHead>
              <FieldRow $mt={8}>
                <FieldLabel>限制选项</FieldLabel>
                <Select $w={152}><SelectText>无</SelectText><Caret /></Select>
              </FieldRow>
            </SubGroup>
            <SubGroup $mt={3}>
              <SubHead><Tri />径向修剪平面 1</SubHead>
              <FieldRow $mt={8}>
                <FieldLabel>限制选项</FieldLabel>
                <Select $w={152}><SelectText>无</SelectText><Caret /></Select>
              </FieldRow>
            </SubGroup>
            <SubGroup $mt={3} $h={27}>
              <SubHead><Tri $right />更多</SubHead>
            </SubGroup>
            <FieldRow $h={32} $mt={2}>
              <FieldLabel $top>切削区域</FieldLabel>
              <IconBtn><FocusRing /><Eye /></IconBtn>
            </FieldRow>
          </Section>
          <Section $h={282}>
            <SectionHead><Tri $big />刀轨设置</SectionHead>
            <FieldRow $mt={6}>
              <FieldLabel>策略</FieldLabel>
              <Select $w={152}><StrategyIcon /><SelectText>单向线性切削</SelectText><Caret /></Select>
            </FieldRow>
            <FieldRow $mt={2}>
              <FieldLabel>方向</FieldLabel>
              <Select $w={152}><ForwardArrow /><SelectText>&nbsp;前进</SelectText><Caret /></Select>
            </FieldRow>
            <FieldRow $mt={2}>
              <FieldLabel>水平角度</FieldLabel>
              <Select $w={152}><SelectText>指定</SelectText><Caret /></Select>
            </FieldRow>
            <FieldRow $mt={2} $h={26}>
              <FieldLabel>与 XC 的夹角</FieldLabel>
              <NumInput $w={90}>180. 0000</NumInput>
            </FieldRow>
            <FieldRow $mt={2}>
              <FieldLabel>切削深度</FieldLabel>
              <Select $w={152}><SelectText>可变平均值</SelectText><Caret /></Select>
            </FieldRow>
            <FieldRow $mt={2}>
              <FieldLabel>最大值</FieldLabel>
              <NumInput $w={90}>2. 0000</NumInput>
              <Select $w={71}><SelectText>mm</SelectText><Caret /></Select>
            </FieldRow>
            <FieldRow $mt={2}>
              <FieldLabel>最小值</FieldLabel>
              <NumInput $w={90}>0. 0000</NumInput>
              <Select $w={71}><SelectText>mm</SelectText><Caret /></Select>
            </FieldRow>
            <SubGroup $mt={2} $h={27}>
              <SubHead><Tri $right />更多</SubHead>
            </SubGroup>
          </Section>
        </Panel>
      </Split>
      <Actions>
        <ActionsHead><Tri $big />操作</ActionsHead>
        <ActionRow>
          <OpBtn><OpGenerate /></OpBtn>
          <OpSplit><Caret /></OpSplit>
          <OpBtn $ml={2}><OpReplay /></OpBtn>
          <OpBtn $ml={2}><OpVerify /></OpBtn>
          <OpBtn $ml={2}><ReportIcon /></OpBtn>
          <OpHot><OpHotIcon /></OpHot>
        </ActionRow>
      </Actions>
      <CollapseBar><UpTri /></CollapseBar>
      <Footer>
        <DlgButton $primary>确定</DlgButton>
        <DlgButton>取消</DlgButton>
      </Footer>
    </Dialog>

    <RedBox $l={694} $t={399} $w={99} $h={55} />
    <RedBox $l={925} $t={428} $w={539} $h={244} />
    <RedNote>查看切削区域，完成掉头加工创建</RedNote>
  </Page>
);

export default App;
